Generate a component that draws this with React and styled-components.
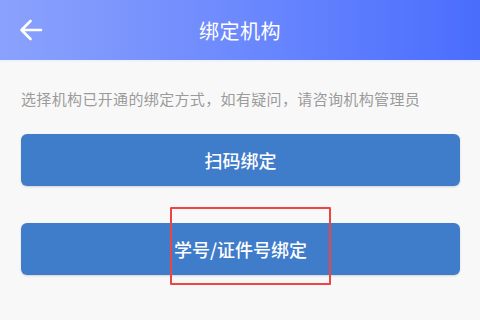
import React from "react"
import styled, { createGlobalStyle } from "styled-components"

const GlobalStyle = createGlobalStyle`
  html, body {
    margin: 0;
    padding: 0;
    background: #f8f8f8;
  }
  body {
    font-family: "Noto Sans CJK SC", "Noto Sans", sans-serif;
  }
`

const Page = styled.div`
  width: 480px;
  height: 320px;
  background: #f8f8f8;
  position: relative;
  overflow: hidden;
`

const Header = styled.div`
  height: 60px;
  display: flex;
  align-items: center;
  justify-content: center;
  position: relative;
  background: linear-gradient(90deg, #8ba2fc 0%, #6c89fd 50%, #4a6dfd 100%);
  border-bottom: 2px solid #eef1fe;
`

const BackButton = styled.div`
  position: absolute;
  left: 19px;
  top: 19px;
  width: 24px;
  height: 22px;
  display: flex;
`

const Title = styled.h1`
  margin: 0;
  color: #ffffff;
  font-size: 20px;
  font-weight: 400;
  letter-spacing: 0.5px;
`

const Content = styled.div`
  padding: 24px 20px 0 21px;
  display: flex;
  flex-direction: column;
`

const Hint = styled.p`
  margin: 0;
  color: #9b9b9b;
  font-size: 15px;
  letter-spacing: 0.35px;
  line-height: 26px;
`

const BindButton = styled.button`
  height: 52px;
  margin-top: ${(p) => p.gap}px;
  border: none;
  border-radius: 6px;
  background: #3f7cc9;
  color: #ffffff;
  font-family: "Noto Sans CJK SC", "Noto Sans", sans-serif;
  font-size: 18px;
  font-weight: 500;
  box-shadow: 0 1px 2px rgba(0, 0, 0, 0.15);
  display: flex;
  align-items: center;
  justify-content: center;
`

const Highlight = styled.div`
  position: absolute;
  left: 170px;
  top: 207px;
  width: 157px;
  height: 74px;
  border: 2px solid #ee4444;
  border-radius: 1px;
  pointer-events: none;
`

export default function App() {
  return (
    <Page>
      <GlobalStyle />
      <Header>
        <BackButton>
          <svg width="24" height="22" viewBox="0 0 24 22" fill="none">
            <path
              d="M22 11H3M11.5 2L2.5 11l9 9"
              stroke="#fff"
              strokeWidth="2.6"
              strokeLinecap="round"
              strokeLinejoin="round"
            />
          </svg>
        </BackButton>
        <Title>绑定机构</Title>
      </Header>
      <Content>
        <Hint>选择机构已开通的绑定方式，如有疑问，请咨询机构管理员</Hint>
        <BindButton gap={22}>扫码绑定</BindButton>
        <BindButton gap={37}>学号/证件号绑定</BindButton>
      </Content>
      <Highlight />
    </Page>
  )
}
